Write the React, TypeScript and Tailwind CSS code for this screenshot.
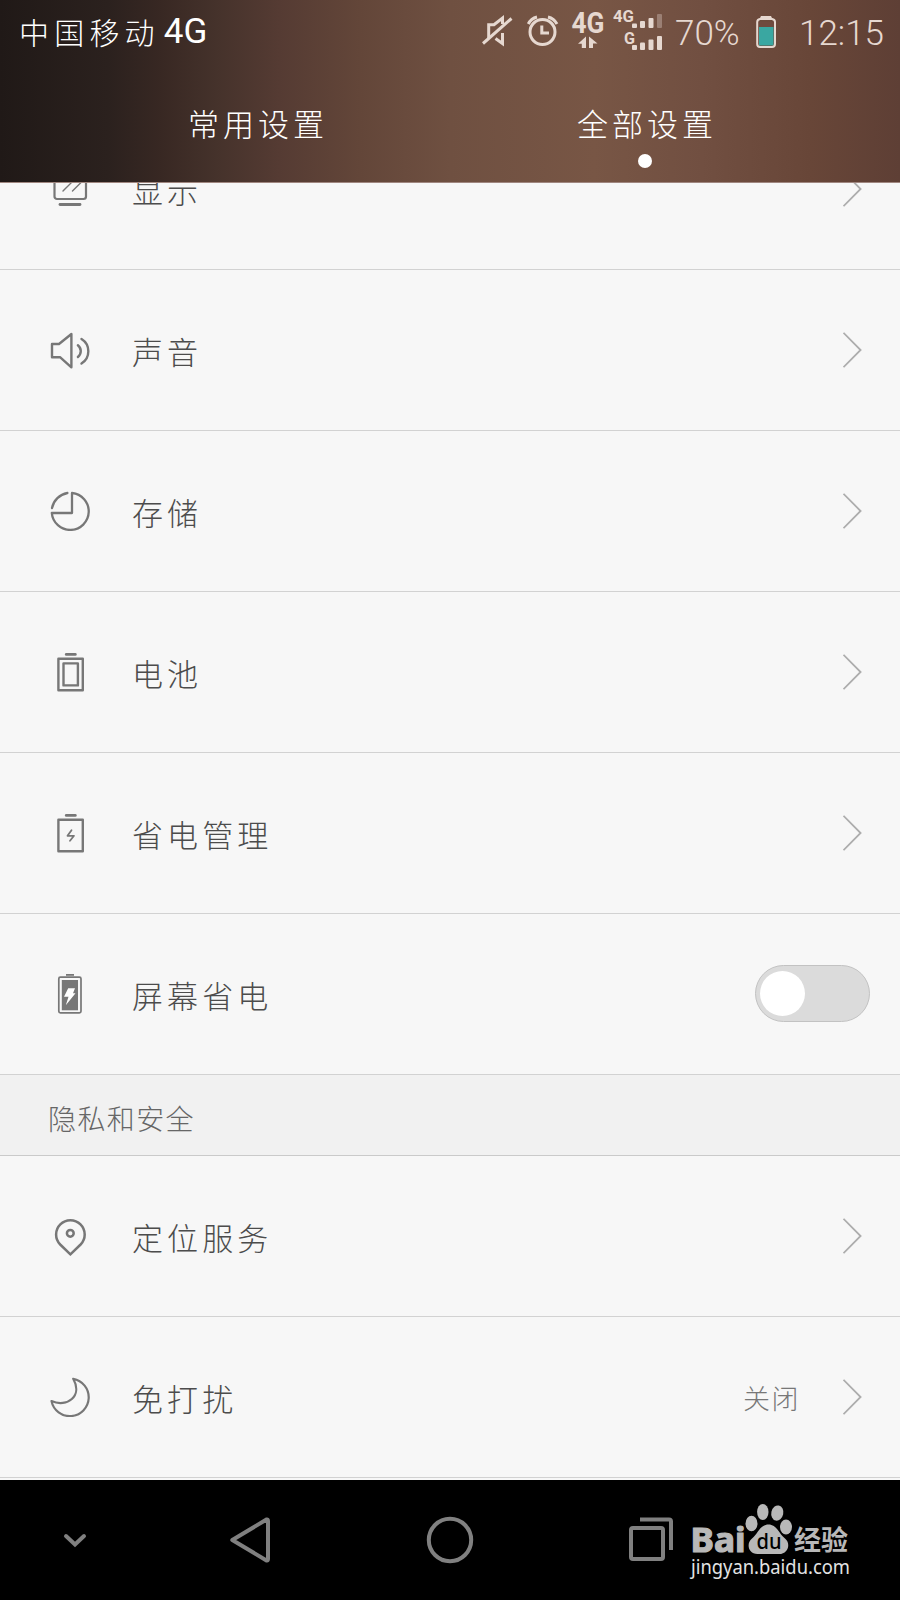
import React from 'react';

const ICON_COLOR = '#777777';

const DisplayIcon = () => (
  <svg width="40" height="40" viewBox="0 0 40 40" fill="none" stroke={ICON_COLOR} strokeWidth="2.2" strokeLinecap="round">
    <rect x="4.5" y="2" width="31.5" height="28" rx="2.5" />
    <path d="M13 22l9-9M22.5 22l9-9" strokeWidth="1.4" />
    <path d="M10 35.5h20" strokeWidth="2.8" />
  </svg>
);

const SoundIcon = () => (
  <svg width="40" height="40" viewBox="0 0 40 40" fill="none" stroke={ICON_COLOR} strokeWidth="2.4" strokeLinejoin="round" strokeLinecap="round">
    <path d="M2 14H9L21.4 4V37.3L10 27.2H2Z" />
    <path d="M27.9 15.2A7.5 7.5 0 0 1 27.9 27" />
    <path d="M31.5 9A14.4 14.4 0 0 1 31.5 33.5" />
  </svg>
);

const StorageIcon = () => (
  <svg width="40" height="40" viewBox="0 0 40 40" fill="none" stroke={ICON_COLOR} strokeWidth="2.3" strokeLinejoin="round" strokeLinecap="round">
    <path d="M22 2V22H1.8A18.5 18.5 0 1 0 22 2Z" />
    <path d="M2 17A19 19 0 0 1 17.4 2" />
  </svg>
);

const BatteryIcon = () => (
  <svg width="40" height="40" viewBox="0 0 40 40" fill="none" stroke={ICON_COLOR} strokeWidth="2.4" strokeLinejoin="round" strokeLinecap="round">
    <rect x="8.4" y="6.7" width="24.4" height="31.5" />
    <rect x="13.5" y="11.4" width="14.4" height="22" />
    <path d="M16.2 2.4h9.2" strokeWidth="2.6" />
  </svg>
);

const PowerIcon = () => (
  <svg width="40" height="40" viewBox="0 0 40 40" fill="none" stroke={ICON_COLOR} strokeWidth="2.4" strokeLinejoin="round" strokeLinecap="round">
    <rect x="8.4" y="6.7" width="24.4" height="31.5" />
    <path d="M21.5 17.3L17.5 22.8H24L20 27.7" strokeWidth="1.8" />
    <path d="M16.2 2.4h9.2" strokeWidth="2.6" />
  </svg>
);

const ScreenPowerIcon = () => (
  <svg width="40" height="40" viewBox="0 0 40 40">
    <rect x="8.8" y="3.2" width="22.2" height="35.6" rx="1.6" fill="none" stroke={ICON_COLOR} strokeWidth="1.7" />
    <rect x="11.8" y="6" width="16.2" height="30.3" fill={ICON_COLOR} />
    <path d="M16 .9h8" stroke={ICON_COLOR} strokeWidth="1.8" />
    <path d="M18.2 14.2H25L23 19.2H25.5L15.8 31.2L18.5 22.7H14Z" fill="#fff" />
  </svg>
);

const LocationIcon = () => (
  <svg width="40" height="40" viewBox="0 0 40 40" fill="none" stroke={ICON_COLOR} strokeWidth="2.5">
    <path d="M20.4 38.3L10.2 28.5A14.3 14.3 0 1 1 30.6 28.5Z" />
    <circle cx="20.3" cy="17.3" r="3.4" />
  </svg>
);

const MoonIcon = () => (
  <svg width="40" height="40" viewBox="0 0 40 40" fill="none" stroke={ICON_COLOR} strokeWidth="2.2" strokeLinejoin="round">
    <path d="M23.2 1.8A18.8 18.8 0 1 1 1.5 24.1C17 31 33 19 23.2 1.8Z" />
  </svg>
);

const Chevron = () => (
  <svg width="20" height="38" viewBox="0 0 20 38" fill="none" stroke="#adadad" strokeWidth="1.8">
    <path d="M.5 1.8L17.6 19L.5 36.2" />
  </svg>
);

type Item = {
  label: string;
  icon: React.ReactNode;
  value?: string;
  toggle?: boolean;
};

const deviceItems: Item[] = [
  { label: '显示', icon: <DisplayIcon /> },
  { label: '声音', icon: <SoundIcon /> },
  { label: '存储', icon: <StorageIcon /> },
  { label: '电池', icon: <BatteryIcon /> },
  { label: '省电管理', icon: <PowerIcon /> },
  { label: '屏幕省电', icon: <ScreenPowerIcon />, toggle: true },
];

const privacyItems: Item[] = [
  { label: '定位服务', icon: <LocationIcon /> },
  { label: '免打扰', icon: <MoonIcon />, value: '关闭' },
];

const Row: React.FC<{ item: Item }> = ({ item }) => (
  <div className="flex h-[161px] shrink-0 items-center border-b border-[#d2d2d2] pl-[50px]">
    {item.icon}
    <span className="ml-[42px] mt-0.5 grow text-[31px] leading-10 tracking-[4.1px] text-[#4c4c4c]">{item.label}</span>
    {item.value && (
      <span className="mr-[43px] mt-0.5 text-[27px] leading-10 tracking-[1.5px] text-[#777]">{item.value}</span>
    )}
    {item.toggle ? (
      <div className="mb-0.5 mr-[30px] flex h-[57px] w-[115px] items-center rounded-full border border-[#c2c2c2] bg-[#dbdbdb] pl-1">
        <div className="size-[45px] rounded-full bg-white" />
      </div>
    ) : (
      <div className="mr-[37px]">
        <Chevron />
      </div>
    )}
  </div>
);

const StatusBar = () => (
  <div className="flex h-16 items-center text-white">
    <span className="ml-[19px] mb-0.5 text-[30px] tracking-[5.2px]">中国移动</span>
    <span className="ml-1 font-[Roboto] text-[35px] font-normal">4G</span>
    <div className="ml-auto flex h-16 items-center pr-[12px] text-[#e6d8d0]">
      {/* muted, alarm, network type and signal levels */}
      <svg width="182" height="64" viewBox="481 0 182 64" fill="none" stroke="currentColor">
        <path d="M488.7 38V24.7H494L502.5 18V24" strokeWidth="3" />
        <path d="M483 43.5L511.5 18.5" strokeWidth="3" />
        <path d="M495.5 38.5L502.5 43.5V33" strokeWidth="3" />
        <circle cx="542.5" cy="32" r="12.5" strokeWidth="3" />
        <path d="M541.8 25.5V33H549" strokeWidth="3" />
        <path d="M528.3 24Q531 18.5 537 17M557 24Q554 18.5 548 17" strokeWidth="3" />
        <g fill="currentColor" stroke="none" fontFamily="Roboto" fontWeight="700">
          <text x="571.5" y="33" fontSize="29" textLength="33" lengthAdjust="spacingAndGlyphs">4G</text>
          <path d="M578 43.8L586 36.5V48H581.8V43.8ZM597.5 43.5L589 36.5V48H593V43.5Z" />
          <text x="613" y="22" fontSize="17" textLength="21" lengthAdjust="spacingAndGlyphs">4G</text>
          <text x="624" y="43.5" fontSize="16" textLength="11" lengthAdjust="spacingAndGlyphs">G</text>
          <rect x="632" y="23.5" width="5" height="4.5" rx="1" />
          <rect x="640" y="21" width="5" height="7" rx="1" />
          <rect x="648.5" y="18" width="5" height="10" rx="1" />
          <rect x="657" y="14" width="5" height="14" rx="1" opacity=".35" />
          <rect x="632" y="45" width="5" height="5" rx="1" />
          <rect x="640" y="42.5" width="5" height="7.5" rx="1" />
          <rect x="648.5" y="39.5" width="5" height="10.5" rx="1" />
          <rect x="657" y="36" width="5" height="14" rx="1" />
        </g>
      </svg>
      <span className="ml-3 mt-1 w-[66px] font-[Roboto] text-[35px] font-light">70%</span>
      <svg className="ml-[14px]" width="22" height="64" viewBox="755 0 22 64">
        <rect x="758.5" y="22" width="15.5" height="23" fill="#6f4a3e" />
        <rect x="759" y="27" width="14.5" height="18.5" fill="#3aa7a1" />
        <path d="M757.2 22Q757.2 19.5 760 19H772Q775 19.5 775 22V44Q775 47 772 47H760Q757.2 47 757.2 44Z" fill="none" stroke="currentColor" strokeWidth="2" />
        <path d="M761 16H771L773 20H759Z" fill="currentColor" />
      </svg>
      <span className="ml-[22px] mt-1 w-[89px] font-[Roboto] text-[35px] font-light">12:15</span>
    </div>
  </div>
);

const Watermark = () => (
  <svg className="absolute right-[48px] top-[20px]" width="164" height="80" viewBox="688 1500 164 80" fill="#b8b8b8">
    <text x="690.5" y="1552" fontFamily="'Noto Sans', sans-serif" fontWeight="700" fontSize="34" stroke="#b8b8b8" strokeWidth="1.2" textLength="55" lengthAdjust="spacingAndGlyphs">Bai</text>
    <ellipse cx="751.5" cy="1523.5" rx="6" ry="7.7" />
    <ellipse cx="762.8" cy="1512" rx="5.7" ry="8" />
    <ellipse cx="777.3" cy="1513" rx="6" ry="7.7" transform="rotate(12 777 1513)" />
    <ellipse cx="786" cy="1527" rx="6" ry="7.5" />
    <path d="M768.5 1524.5C760 1524.5 758 1534 752 1538.5C746 1543 748 1554 757.5 1554C763 1554 773 1554 779 1554C788.5 1554 791 1543 785 1538.5C779 1534 777 1524.5 768.5 1524.5Z" />
    <text x="756.5" y="1549" fontFamily="'Noto Sans', sans-serif" fontWeight="500" fontSize="22" fill="#000" textLength="25" lengthAdjust="spacingAndGlyphs">du</text>
    <text x="794" y="1550" fontFamily="'Noto Sans CJK SC', sans-serif" fontWeight="700" fontSize="27" textLength="54" lengthAdjust="spacingAndGlyphs">经验</text>
    <text x="691" y="1574" fontFamily="'Noto Sans', sans-serif" fontWeight="400" fontSize="19.5" fill="#e3e3e3" textLength="159" lengthAdjust="spacingAndGlyphs">jingyan.baidu.com</text>
  </svg>
);

const NavBar = () => (
  <div className="relative flex h-[120px] shrink-0 items-center bg-black">
    <svg className="ml-[63px]" width="24" height="50" viewBox="63 1515 24 50" fill="none" stroke="#808080" strokeWidth="4" strokeLinecap="round">
      <path d="M66 1536L75 1544.5L84 1536" />
    </svg>
    <svg className="ml-[142px]" width="44" height="50" viewBox="229 1515 44 50" fill="none" stroke="#808080" strokeWidth="4" strokeLinejoin="round">
      <path d="M232.3 1540L266.5 1519.5Q268 1519 268 1521V1559Q268 1561 266.5 1560.5Z" />
    </svg>
    <svg className="ml-[152px]" width="50" height="50" viewBox="425 1515 50 50" fill="none" stroke="#808080" strokeWidth="4">
      <circle cx="450" cy="1540" r="21.2" />
    </svg>
    <svg className="ml-[152px]" width="48" height="50" viewBox="627 1515 48 50" fill="none" stroke="#808080" strokeWidth="4">
      <rect x="631" y="1528" width="32" height="31" rx="2" />
      <path d="M640 1519.5H669Q671 1519.5 671 1521.5V1550" />
    </svg>
    <Watermark />
  </div>
);

export default function App() {
  return (
    <div className="flex h-[1600px] w-[900px] flex-col overflow-hidden bg-[#f7f7f7] font-['Noto_Sans_CJK_SC',sans-serif] font-light">
      <header className="h-[183px] shrink-0 border-b border-[#a08780] bg-[linear-gradient(90deg,#201917_0%,#2b211e_12%,#382823_18%,#45322b_24%,#553b33_31%,#634639_40%,#6f5041_50%,#785645_66%,#714f41_78%,#684638_90%,#5e3f35_100%)]">
        <StatusBar />
        <nav className="grid grid-cols-2 pt-[39px] text-[31px] leading-10 tracking-[4px] text-white">
          <div className="pl-[188px]">常用设置</div>
          <div className="pl-[127px]">全部设置</div>
        </nav>
        <div className="ml-[638px] mt-[11px] size-[14px] rounded-full bg-white" />
      </header>

      <main className="flex h-[1297px] shrink-0 flex-col overflow-hidden">
        <div className="-mt-[74px] shrink-0">
          {deviceItems.map((item) => (
            <Row key={item.label} item={item} />
          ))}
        </div>
        <h2 className="flex h-[81px] shrink-0 items-center border-b border-[#cacaca] bg-[#f1f1f1] pl-12 pt-1.5 text-[28px] tracking-[1.4px] text-[#666]">
          隐私和安全
        </h2>
        {privacyItems.map((item) => (
          <Row key={item.label} item={item} />
        ))}
      </main>

      <NavBar />
    </div>
  );
}
